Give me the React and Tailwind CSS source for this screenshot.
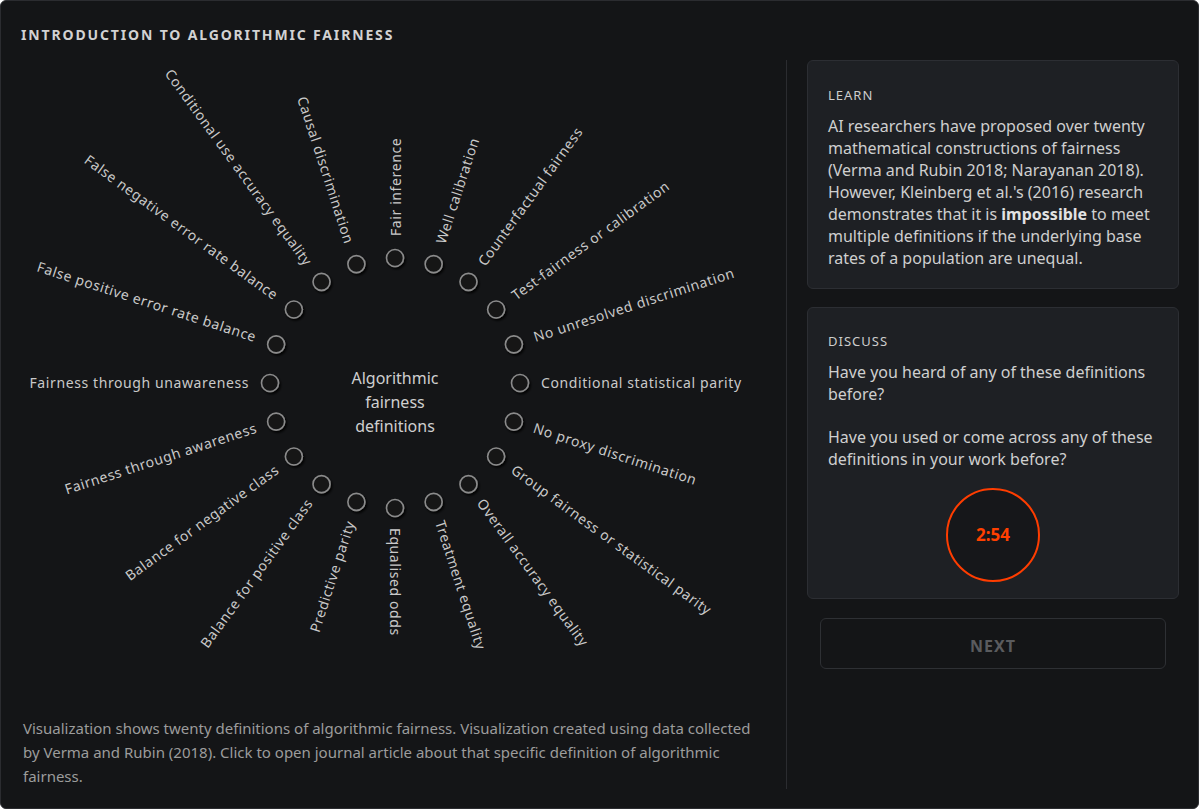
import React from 'react'

const definitions = [
  'Fair inference',
  'Well calibration',
  'Counterfactual fairness',
  'Test-fairness or calibration',
  'No unresolved discrimination',
  'Conditional statistical parity',
  'No proxy discrimination',
  'Group fairness or statistical parity',
  'Overall accuracy equality',
  'Treatment equality',
  'Equalised odds',
  'Predictive parity',
  'Balance for positive class',
  'Balance for negative class',
  'Fairness through awareness',
  'Fairness through unawareness',
  'False positive error rate balance',
  'False negative error rate balance',
  'Conditional use accuracy equality',
  'Causal discrimination',
]

const font = "font-['Noto_Sans',_'Liberation_Sans',_sans-serif]"

function FairnessWheel() {
  const cx = 394
  const cy = 323
  const r = 125
  const labelR = r + 21

  return (
    <svg width="785" height="656" viewBox="0 0 785 656" className="block">
      <defs>
        <filter id="dotShadow" x="-50%" y="-50%" width="200%" height="200%">
          <feDropShadow dx="1.5" dy="2" stdDeviation="1.2" floodColor="#000" floodOpacity="0.9" />
        </filter>
      </defs>
      {definitions.map((name, i) => {
        const deg = -90 + i * 18
        const rad = (deg * Math.PI) / 180
        const x = cx + r * Math.cos(rad)
        const y = cy + r * Math.sin(rad)
        const lx = cx + labelR * Math.cos(rad)
        const ly = cy + labelR * Math.sin(rad) - 1
        const leftSide = deg > 90 && deg < 270
        const rot = leftSide ? deg - 180 : deg
        return (
          <g key={name} className="cursor-pointer">
            <circle cx={x} cy={y} r="8.5" fill="#141517" stroke="#8b8b8b" strokeWidth="1.6" filter="url(#dotShadow)" />
            <text
              x={lx}
              y={ly}
              transform={`rotate(${rot} ${lx} ${ly})`}
              textAnchor={leftSide ? 'end' : 'start'}
              dominantBaseline="central"
              fill="#c9c9c9"
              fontSize="14"
              letterSpacing="0.6"
            >
              {name}
            </text>
          </g>
        )
      })}
      <text x={cx} y={cy - 5} textAnchor="middle" dominantBaseline="central" fill="#cfcfcf" fontSize="16">
        <tspan x={cx} dy="0">Algorithmic</tspan>
        <tspan x={cx} dy="24">fairness</tspan>
        <tspan x={cx} dy="24">definitions</tspan>
      </text>
    </svg>
  )
}

export default function App() {
  return (
    <div className={`w-[1199px] h-[809px] bg-[#141517] border border-[#2b2c30] rounded-md flex flex-col overflow-hidden ${font}`}>
      <div className="px-5 pt-[26px] h-[59px]">
        <h1 className="text-[14px] leading-4 font-bold tracking-[1.85px] text-[#d2d2d2]">
          INTRODUCTION TO ALGORITHMIC FAIRNESS
        </h1>
      </div>

      <div className="flex flex-1 min-h-0">
        <div className="w-[785px] flex flex-col">
          <FairnessWheel />
          <p className="px-[22px] text-[15px] leading-6 text-[#9c9c9c]">
            Visualization shows twenty definitions of algorithmic fairness. Visualization created using data collected
            by Verma and Rubin (2018). Click to open journal article about that specific definition of algorithmic
            fairness.
          </p>
        </div>

        <div className="flex-1 border-l border-[#2b2c30] mb-[19px] pl-5 pr-5">
          <div className="bg-[#1e2024] border border-[#2c2e33] rounded-md px-5 pt-6 pb-[19px]">
            <h2 className="text-[13px] leading-5 tracking-[1px] text-[#cdcdcd]">LEARN</h2>
            <p className="mt-2.5 text-[16px] leading-[22px] text-[#cfcfcf]">
              AI researchers have proposed over twenty mathematical constructions of fairness (Verma and Rubin 2018;
              Narayanan 2018). However, Kleinberg et al.'s (2016) research demonstrates that it is{' '}
              <strong className="font-bold text-[#e2e2e2]">impossible</strong> to meet multiple definitions if the
              underlying base rates of a population are unequal.
            </p>
          </div>

          <div className="mt-[18px] bg-[#1e2024] border border-[#2c2e33] rounded-md px-5 pt-[23px] pb-4">
            <h2 className="text-[13px] leading-5 tracking-[1px] text-[#cdcdcd]">DISCUSS</h2>
            <p className="mt-2.5 text-[16px] leading-[22px] text-[#cfcfcf]">
              Have you heard of any of these definitions before?
            </p>
            <p className="mt-[21px] text-[16px] leading-[22px] text-[#cfcfcf]">
              Have you used or come across any of these definitions in your work before?
            </p>
            <div className="mt-[18px] flex justify-center">
              <div className="w-[94px] h-[94px] rounded-full border-2 border-[#ff3d00] bg-[#16171a] flex items-center justify-center">
                <span className="text-[17px] font-bold text-[#ff4000]">2:54</span>
              </div>
            </div>
          </div>

          <button className="mt-[19px] mx-[13px] w-[346px] h-[51px] pt-1 rounded-md border border-[#2e3034] bg-[#141517] text-[16px] font-bold tracking-[1px] text-[#5a5b5e]">
            NEXT
          </button>
        </div>
      </div>
    </div>
  )
}
